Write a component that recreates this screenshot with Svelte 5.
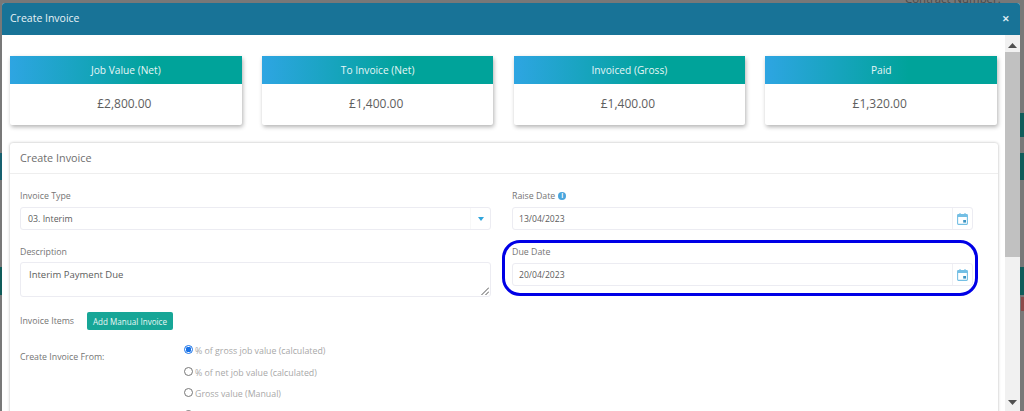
<script>
	const totals = [
		{ title: 'Job Value (Net)', value: '£2,800.00' },
		{ title: 'To Invoice (Net)', value: '£1,400.00' },
		{ title: 'Invoiced (Gross)', value: '£1,400.00' },
		{ title: 'Paid', value: '£1,320.00' }
	];

	// the fourth option is scrolled almost out of view, only its dot shows
	const sources = [
		{ label: '% of gross job value (calculated)', checked: true },
		{ label: '% of net job value (calculated)', checked: false },
		{ label: 'Gross value (Manual)', checked: false },
		{ label: '', checked: false }
	];
</script>

{#snippet calendar()}
	<span class="addon">
		<svg width="11" height="12" viewBox="0 0 11 12">
			<path d="M3 0v2.5M8 0v2.5" stroke="#7cc3e6" stroke-width="1.2" fill="none" />
			<rect x="0.6" y="1.6" width="9.8" height="9.8" rx="0.8" fill="#fff" stroke="#74bfe4" stroke-width="1.1" />
			<rect x="0.6" y="1.6" width="9.8" height="2.4" fill="#74bfe4" />
			<rect x="6.2" y="7" width="2.8" height="2.6" fill="#3d94c2" />
		</svg>
	</span>
{/snippet}

<div class="backdrop">
	<span class="behind">Contract Number:</span>
	<div class="strip right r1"></div>
	<div class="strip right r2"></div>
	<div class="strip right r3"></div>
	<div class="strip right r4"></div>
	<div class="strip left r2 blue"></div>
	<div class="strip left r3"></div>

	<div class="modal">
		<header class="modal-head">
			<span>Create Invoice</span>
			<span class="close">✕</span>
		</header>

		<div class="modal-body">
			<div class="content">
				<div class="totals">
					{#each totals as t}
						<div class="total">
							<div class="total-title">{t.title}</div>
							<div class="total-value">{t.value}</div>
						</div>
					{/each}
				</div>

				<section class="panel">
					<h2>Create Invoice</h2>
					<div class="form">
						<div class="field">
							<span class="label">Invoice Type</span>
							<div class="input">
								<span class="text">03. Interim</span>
								<span class="addon select-addon">
									<svg width="6" height="4" viewBox="0 0 6 4"><path d="M0 0h6L3 4z" fill="#2fa5dc" /></svg>
								</span>
							</div>
						</div>
						<div class="field">
							<span class="label">
								Raise Date
								<span class="info">i</span>
							</span>
							<div class="input date">
								<span class="text">13/04/2023</span>
								{@render calendar()}
							</div>
						</div>
						<div class="field">
							<span class="label">Description</span>
							<div class="input area">
								<span class="text">Interim Payment Due</span>
								<svg class="grip" width="8" height="8" viewBox="0 0 8 8">
									<path d="M0.5 8L8 0.5M4.5 8L8 4.5" stroke="#555" stroke-width="1" fill="none" />
								</svg>
							</div>
						</div>
						<div class="field">
							<span class="label">Due Date</span>
							<div class="input date">
								<span class="text">20/04/2023</span>
								{@render calendar()}
							</div>
							<div class="highlight"></div>
						</div>
					</div>

					<div class="items">
						<span class="label items-label">Invoice Items</span>
						<button type="button">Add Manual Invoice</button>
					</div>

					<div class="from">
						<span class="label from-label">Create Invoice From:</span>
						<div class="radios">
							{#each sources as s}
								<div class="radio">
									<span class="dot" class:checked={s.checked}></span>
									<span>{s.label}</span>
								</div>
							{/each}
						</div>
					</div>
				</section>
			</div>

			<div class="scrollbar">
				<svg width="9" height="5" viewBox="0 0 9 5"><path d="M0 5L4.5 0 9 5z" fill="#505050" /></svg>
				<div class="track"><div class="thumb"></div></div>
				<svg width="9" height="5" viewBox="0 0 9 5"><path d="M0 0L4.5 5 9 0z" fill="#505050" /></svg>
			</div>
		</div>
	</div>
</div>

<style>
	:global(body) {
		margin: 0;
		overflow: hidden;
	}

	.backdrop {
		position: relative;
		box-sizing: border-box;
		width: 1024px;
		height: 411px;
		padding: 3px 4px 0 2px;
		overflow: hidden;
		background: #787878;
		font-family: "Open Sans", sans-serif;
		color: #6b6b6b;
	}

	.behind {
		position: absolute;
		left: 905px;
		top: -9px;
		font-size: 11.4px;
		color: #4a4a4a;
	}

	.strip {
		position: absolute;
		background: #0f5c5a;
	}

	.right {
		right: 0;
		width: 4px;
	}

	.left {
		left: 0;
		width: 2px;
	}

	.blue {
		background: #17606f;
	}

	.r1 {
		top: 113px;
		height: 24px;
	}

	.r2 {
		top: 153px;
		height: 27px;
	}

	.r3 {
		top: 267px;
		height: 28px;
	}

	.r4 {
		top: 297px;
		height: 14px;
		width: 3px;
		background: #8c4a4a;
	}

	.modal {
		position: relative;
		display: flex;
		flex-direction: column;
		height: 408px;
		background: #fff;
		border-radius: 3px 3px 0 0;
	}

	.modal-head {
		display: flex;
		align-items: center;
		justify-content: space-between;
		flex: none;
		box-sizing: border-box;
		height: 32px;
		padding: 0 10px 2px 8px;
		background: #187397;
		border-radius: 3px 3px 0 0;
		color: #e8f2f6;
		font-size: 10.5px;
	}

	.close {
		font-size: 9px;
		font-weight: 700;
		color: #dcecf2;
	}

	.modal-body {
		display: flex;
		flex: 1;
		min-height: 0;
	}

	.content {
		flex: 1;
		min-width: 0;
		padding: 21px 6px 0 8px;
		overflow: hidden;
	}

	.totals {
		display: grid;
		grid-template-columns: repeat(4, 231.7px);
		column-gap: 20.1px;
	}

	.total {
		box-shadow: 1px 2px 4px rgba(0, 0, 0, 0.3);
		border-radius: 2px;
		background: #fff;
	}

	.total-title {
		height: 28px;
		line-height: 28px;
		text-align: center;
		font-size: 10.2px;
		color: #e6f6f6;
		background: linear-gradient(90deg, #2ea5e2 0%, #00a39a 62%);
	}

	.total-value {
		box-sizing: border-box;
		height: 41px;
		padding-right: 3px;
		line-height: 40px;
		text-align: center;
		font-size: 12px;
		color: #5e5e5e;
	}

	.panel {
		margin-top: 18px;
		width: 988px;
		height: 300px;
		box-sizing: border-box;
		background: #fff;
		border-radius: 3px;
		box-shadow: 0 0 3px rgba(0, 0, 0, 0.3);
	}

	h2 {
		margin: 0;
		height: 31px;
		line-height: 30px;
		padding-left: 10px;
		box-sizing: border-box;
		border-bottom: 1px solid #eeeeee;
		font-size: 10.8px;
		font-weight: 400;
		color: #6e6e6e;
	}

	.form {
		display: grid;
		grid-template-columns: 471px 461px;
		column-gap: 21px;
		padding: 13px 0 0 10px;
	}

	.field {
		position: relative;
		height: 56px;
	}

	.label {
		display: flex;
		align-items: center;
		gap: 3px;
		height: 18px;
		font-size: 8.8px;
		color: #757575;
	}

	.info {
		display: inline-block;
		width: 8px;
		height: 8px;
		border-radius: 50%;
		background: #4aa5dc;
		color: #fff;
		font-size: 6.5px;
		font-weight: 700;
		line-height: 8px;
		text-align: center;
	}

	.input {
		position: relative;
		display: flex;
		align-items: center;
		box-sizing: border-box;
		height: 23px;
		margin-top: 2px;
		border: 1px solid #ececf2;
		border-radius: 3px;
		font-size: 8.8px;
		color: #5c5c5c;
	}

	.text {
		flex: 1;
		padding-left: 7px;
	}

	.date {
		font-size: 8.6px;
	}

	.date .text {
		padding-left: 6px;
	}

	.area {
		height: 35px;
		margin-top: 1px;
		align-items: flex-start;
		padding-top: 5px;
		font-size: 9.5px;
	}

	.area .text {
		padding-left: 8px;
	}

	.grip {
		position: absolute;
		right: 1px;
		bottom: 1px;
	}

	.addon {
		display: flex;
		align-items: center;
		justify-content: center;
		align-self: stretch;
		width: 19px;
		border-left: 1px solid #f0f0f4;
	}

	.select-addon {
		border-left-color: #f8f8f8;
	}

	.highlight {
		position: absolute;
		left: -10px;
		right: -5px;
		top: -3px;
		height: 56px;
		box-sizing: border-box;
		border: 3px solid #0000e6;
		border-radius: 18px;
		pointer-events: none;
	}

	.items {
		display: flex;
		align-items: center;
		margin-top: 13px;
		padding-left: 10px;
	}

	.items-label {
		width: 67px;
		margin-top: -1px;
	}

	button {
		height: 18px;
		width: 86px;
		padding: 0;
		border: 0;
		border-radius: 2px;
		background: #17a697;
		color: #e8f7f5;
		font-family: inherit;
		font-size: 8.1px;
	}

	.from {
		display: flex;
		margin-top: 14px;
		padding-left: 10px;
	}

	.from-label {
		width: 164px;
		height: 16px;
		margin-top: 5px;
	}

	.radios {
		display: flex;
		flex-direction: column;
		gap: 7.7px;
		font-size: 8.8px;
		color: #a8a8a8;
	}

	.radio {
		display: flex;
		align-items: center;
		gap: 2px;
		height: 14px;
	}

	.dot {
		box-sizing: border-box;
		width: 9px;
		height: 9px;
		margin-top: -3px;
		border: 1px solid #777;
		border-radius: 50%;
		background: #fff;
	}

	.dot.checked {
		border-color: #1a73e8;
		background: radial-gradient(circle, #1a73e8 0 55%, #fff 60%);
	}

	.scrollbar {
		display: flex;
		flex: none;
		flex-direction: column;
		align-items: center;
		width: 15px;
		padding: 8px 0 6px;
		box-sizing: border-box;
		background: #f1f1f1;
	}

	.track {
		flex: 1;
		width: 100%;
		margin: 4px 0;
	}

	.thumb {
		height: 205px;
		background: #c1c1c1;
	}
</style>
